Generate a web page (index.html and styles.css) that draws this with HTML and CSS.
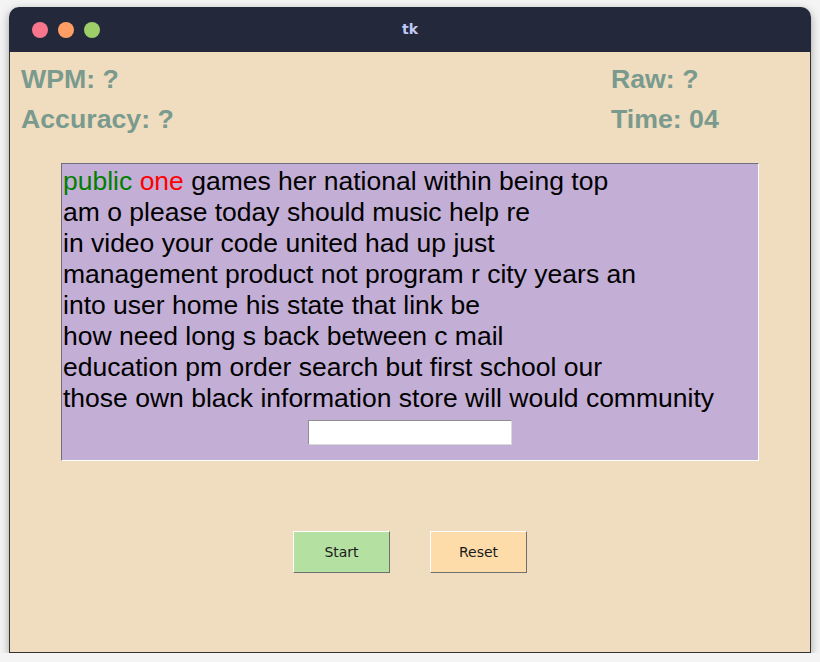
FILE: index.html
```html
<!DOCTYPE html>
<html lang="en">

<head>
  <meta charset="UTF-8">
  <meta name="viewport" content="width=device-width, initial-scale=1.0">
  <title>tk</title>
  <link rel="stylesheet" href="styles.css">
</head>

<body>
  <div class="window">
    <div class="titlebar">
      <div class="lights">
        <span class="light red"></span>
        <span class="light orange"></span>
        <span class="light green"></span>
      </div>
      <div class="title">tk</div>
    </div>

    <div class="content">
      <div class="stats">
        <div class="stat">WPM: ?</div>
        <div class="stat">Raw: ?</div>
        <div class="stat">Accuracy: ?</div>
        <div class="stat">Time: 04</div>
      </div>

      <div class="text-box">
        <div class="words">
          <span class="correct">public</span> <span class="wrong">one</span> games her national within being top<br>
          am o please today should music help re<br>
          in video your code united had up just<br>
          management product not program r city years an<br>
          into user home his state that link be<br>
          how need long s back between c mail<br>
          education pm order search but first school our<br>
          those own black information store will would community
        </div>
        <input class="entry" type="text">
      </div>

      <div class="buttons">
        <button class="btn start">Start</button>
        <button class="btn reset">Reset</button>
      </div>
    </div>
  </div>
</body>

</html>
```

FILE: styles.css
```css
body {
  margin: 0;
  background-color: #f4f4f4;
  font-family: 'Liberation Sans', Arial, sans-serif;
}

.window {
  margin: 7px 0 0 9px;
  width: 802px;
  height: 646px;
  border-radius: 10px 10px 0 0;
  overflow: hidden;
  box-shadow: 0 3px 10px rgba(0, 0, 0, 0.35);
  display: flex;
  flex-direction: column;
}

.titlebar {
  height: 45px;
  background-color: #24283b;
  position: relative;
  display: flex;
  align-items: center;
  justify-content: center;
}

.lights {
  position: absolute;
  left: 23px;
  top: 15px;
  display: flex;
  gap: 10px;
}

.light {
  width: 16px;
  height: 16px;
  border-radius: 50%;
}

.red {
  background-color: #f7768e;
}

.orange {
  background-color: #ff9e64;
}

.green {
  background-color: #9ece6a;
}

.title {
  font-family: 'DejaVu Sans', sans-serif;
  font-weight: bold;
  font-size: 14px;
  color: #c0caf5;
  margin-top: -1px;
}

.content {
  flex: 1;
  background-color: #f0ddbf;
  border: 1px solid #333333;
  border-top: none;
}

.stats {
  display: grid;
  grid-template-columns: 590px auto;
  row-gap: 12px;
  padding: 13px 10px 0 11px;
}

.stat {
  font-size: 26.7px;
  font-weight: bold;
  color: #7a9a8e;
  line-height: 28px;
}

.text-box {
  margin: 30px 0 0 51px;
  width: 696px;
  height: 296px;
  background-color: #c3aed6;
  border: 1px solid #ffffff;
  border-top-color: #6e6e7e;
  border-left-color: #6e6e7e;
  display: flex;
  flex-direction: column;
  align-items: center;
}

.words {
  align-self: stretch;
  padding: 2px 0 0 1px;
  font-size: 26.5px;
  line-height: 31px;
  color: #000000;
}

.correct {
  color: #008000;
}

.wrong {
  color: #ff0000;
}

.entry {
  margin-top: 6px;
  width: 204px;
  height: 25px;
  box-sizing: border-box;
  padding: 0;
  background-color: #ffffff;
  border: 1px solid #d9d9d9;
  border-top-color: #8e8e8e;
  border-left-color: #8e8e8e;
  outline: none;
}

.buttons {
  display: flex;
  justify-content: center;
  gap: 40px;
  margin-top: 70px;
}

.btn {
  width: 97px;
  height: 42px;
  font-family: 'DejaVu Sans', sans-serif;
  font-size: 14px;
  color: #1a1a1a;
  border: 1px solid #6f6f6f;
  border-top-color: #ffffff;
  border-left-color: #ffffff;
  padding: 0;
}

.start {
  background-color: #b4e1a1;
}

.reset {
  background-color: #fddcaa;
}
```
